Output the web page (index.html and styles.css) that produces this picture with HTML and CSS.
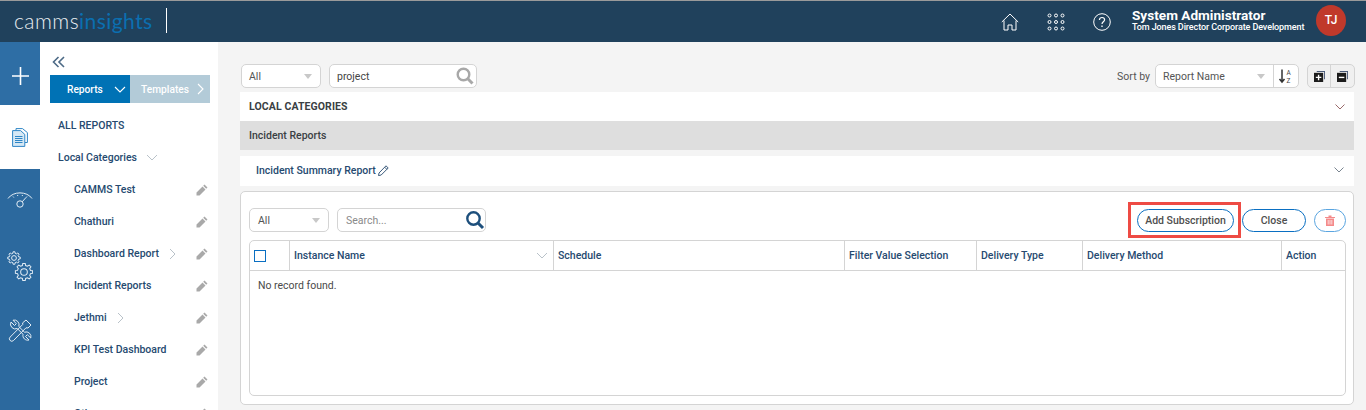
FILE: index.html
```html
<!DOCTYPE html>
<html lang="en">
  <head>
    <meta charset="UTF-8">
    <title>Camms Insights - Reports</title>
    <link rel="stylesheet" href="styles.css">
  </head>
  <body>
    <header class="topbar">
      <div class="logo"><span class="logo-a">camms</span><span class="logo-b">insights</span></div>
      <div class="logo-rule"></div>
      <div class="top-icons">
        <svg class="top-icon" width="18" height="18" viewBox="0 0 18 18" fill="none" stroke="#fff" stroke-width="1"><path d="M0.8 9 9 1l8.2 8M3 7.500V17h4v-5h4v5h4V7.500"/></svg>
        <svg class="top-icon" width="18" height="18" viewBox="0 0 18 18" fill="none" stroke="#fff" stroke-width="1"><circle cx="2.500" cy="2.500" r="1.500"/><circle cx="9" cy="2.500" r="1.500"/><circle cx="15.500" cy="2.500" r="1.500"/><circle cx="2.500" cy="9" r="1.500"/><circle cx="9" cy="9" r="1.500"/><circle cx="15.500" cy="9" r="1.500"/><circle cx="2.500" cy="15.500" r="1.500"/><circle cx="9" cy="15.500" r="1.500"/><circle cx="15.500" cy="15.500" r="1.500"/></svg>
        <svg class="top-icon" width="18" height="18" viewBox="0 0 18 18" fill="none" stroke="#fff" stroke-width="1"><circle cx="9" cy="9" r="8.300"/><path d="M6.400 7c0-1.600 1.200-2.500 2.600-2.500s2.600.9 2.600 2.300c0 2-2.600 2-2.600 4.200" stroke-width="1.200"/><path d="M9 12.600v1.400" stroke-width="1.300"/></svg>
      </div>
      <div class="user">
        <div class="user-name">System Administrator</div>
        <div class="user-role">Tom Jones Director Corporate Development</div>
      </div>
      <div class="avatar">TJ</div>
    </header>
    <div class="page">
      <nav class="rail">
        <div class="rail-item rail-add">
          <svg width="17" height="18" viewBox="0 0 17 18" stroke="#fff" stroke-width="1.600"><path d="M8.500 0v18M0 9h17"/></svg>
        </div>
        <div class="rail-item rail-active">
          <svg width="16" height="19" viewBox="0 0 16 19" fill="none" stroke="#2f86c6" stroke-width="1"><path d="M4 2.500V.6h6.500l4.900 4V14.500h-2.500"/><path d="M.6 2.600h8l4.200 3.800v12H.6z" fill="#d5e8f5"/><path d="M3 8.500h7.500M3 10.500h7.500M3 12.500h7.500M3 14.500h7.500" stroke-width="1.100"/></svg>
        </div>
        <div class="rail-item">
          <svg width="26" height="20" viewBox="0 0 26 20" fill="none" stroke="#e3edf5" stroke-width="1"><path d="M1 7.500C6 0 20 0 25 7.500"/><path d="M6 5.500l.8 1M10.500 4l.3 1M15.500 4l-.3 1M20 5.500l-.8 1"/><circle cx="13" cy="13" r="3.200"/><path d="M15.200 10.800 19 6.500"/></svg>
        </div>
        <div class="rail-item">
          <svg width="26" height="30" viewBox="0 0 26 30" fill="none" stroke="#e3edf5">
            <g transform="translate(7 7) scale(1.050)" stroke-width=".95">
              <polygon class="gear-shape" points="4.460,-1.110 5.940,-.84 5.940,.84 4.460,1.110 3.940,2.370 4.790,3.610 3.610,4.790 2.370,3.940 1.110,4.460 .84,5.940 -.84,5.940 -1.110,4.460 -2.370,3.940 -3.610,4.790 -4.790,3.610 -3.940,2.370 -4.460,1.110 -5.940,.84 -5.940,-.84 -4.460,-1.110 -3.940,-2.370 -4.790,-3.610 -3.610,-4.790 -2.370,-3.940 -1.110,-4.460 -.84,-5.940 .84,-5.940 1.110,-4.460 2.370,-3.940 3.610,-4.790 4.790,-3.610 3.940,-2.370"/>
              <circle r="2.300"/>
            </g>
            <g transform="translate(17 21) scale(1.450)" stroke-width=".69">
              <polygon class="gear-shape" points="4.460,-1.110 5.940,-.84 5.940,.84 4.460,1.110 3.940,2.370 4.790,3.610 3.610,4.790 2.370,3.940 1.110,4.460 .84,5.940 -.84,5.940 -1.110,4.460 -2.370,3.940 -3.610,4.790 -4.790,3.610 -3.940,2.370 -4.460,1.110 -5.940,.84 -5.940,-.84 -4.460,-1.110 -3.940,-2.370 -4.790,-3.610 -3.610,-4.790 -2.370,-3.940 -1.110,-4.460 -.84,-5.940 .84,-5.940 1.110,-4.460 2.370,-3.940 3.610,-4.790 4.790,-3.610 3.940,-2.370"/>
              <circle r="2.300"/>
            </g>
          </svg>
        </div>
        <div class="rail-item">
          <svg width="24" height="24" viewBox="0 0 24 24" fill="none" stroke="#e3edf5" stroke-width="1"><path d="M18 1l5 5-3 3-2-.2L5.500 21.500a2.400 2.400 0 0 1-3.400-3.400L14.800 5.400l-.2-1.500z"/><path d="M3 3l3.500 3.500 1.800-1.800L5 1.200A4.800 4.800 0 0 1 10.800 7.500L16.500 13.200A4.800 4.800 0 0 1 22.800 19L19.300 15.700l-1.800 1.800L21 21A4.800 4.800 0 0 1 15 15.300L9.300 9.500A4.800 4.800 0 0 1 3 3z"/></svg>
        </div>
      </nav>
      <aside class="sidebar">
        <div class="collapse">
          <svg width="13" height="12" viewBox="0 0 13 12" fill="none" stroke="#4d6a86" stroke-width="1.600"><path d="M6.500 1 1.500 6l5 5M12 1 7 6l5 5"/></svg>
        </div>
        <div class="tabs">
          <div class="tab tab-on">Reports<svg class="tab-arrow" width="12" height="7" viewBox="0 0 12 7" fill="none" stroke="#fff" stroke-width="1.100"><path d="M1 1l5 5 5-5"/></svg></div>
          <div class="tab tab-off">Templates<svg class="tab-arrow" width="7" height="12" viewBox="0 0 7 12" fill="none" stroke="#fff" stroke-width="1.100"><path d="M1 1l5 5-5 5"/></svg></div>
        </div>
        <div class="all-reports">ALL REPORTS</div>
        <div class="cat-head">Local Categories<svg class="chev" width="12" height="7" viewBox="0 0 12 7" fill="none" stroke="#b9c2c9"><path d="M1 1l5 5 5-5"/></svg></div>
        <ul class="cat-list">
          <li>CAMMS Test<svg class="pencil" width="12" height="12" viewBox="0 0 12 12" fill="#a9a9a9"><path d="M8.500.5l3 3-1.300 1.300-3-3zM6.500 2.500l3 3-6 6H.5v-3z"/></svg></li>
          <li>Chathuri<svg class="pencil" width="12" height="12" viewBox="0 0 12 12" fill="#a9a9a9"><path d="M8.500.5l3 3-1.300 1.300-3-3zM6.500 2.500l3 3-6 6H.5v-3z"/></svg></li>
          <li>Dashboard Report<svg class="chev" width="7" height="12" viewBox="0 0 7 12" fill="none" stroke="#b9c2c9"><path d="M1 1l5 5-5 5"/></svg><svg class="pencil" width="12" height="12" viewBox="0 0 12 12" fill="#a9a9a9"><path d="M8.500.5l3 3-1.300 1.300-3-3zM6.500 2.500l3 3-6 6H.5v-3z"/></svg></li>
          <li>Incident Reports<svg class="pencil" width="12" height="12" viewBox="0 0 12 12" fill="#a9a9a9"><path d="M8.500.5l3 3-1.300 1.300-3-3zM6.500 2.500l3 3-6 6H.5v-3z"/></svg></li>
          <li>Jethmi<svg class="chev" width="7" height="12" viewBox="0 0 7 12" fill="none" stroke="#b9c2c9"><path d="M1 1l5 5-5 5"/></svg><svg class="pencil" width="12" height="12" viewBox="0 0 12 12" fill="#a9a9a9"><path d="M8.500.5l3 3-1.300 1.300-3-3zM6.500 2.500l3 3-6 6H.5v-3z"/></svg></li>
          <li>KPI Test Dashboard<svg class="pencil" width="12" height="12" viewBox="0 0 12 12" fill="#a9a9a9"><path d="M8.500.5l3 3-1.300 1.300-3-3zM6.500 2.500l3 3-6 6H.5v-3z"/></svg></li>
          <li>Project<svg class="pencil" width="12" height="12" viewBox="0 0 12 12" fill="#a9a9a9"><path d="M8.500.5l3 3-1.300 1.300-3-3zM6.500 2.500l3 3-6 6H.5v-3z"/></svg></li>
          <li>Other<svg class="pencil" width="12" height="12" viewBox="0 0 12 12" fill="#a9a9a9"><path d="M8.500.5l3 3-1.300 1.300-3-3zM6.500 2.500l3 3-6 6H.5v-3z"/></svg></li>
        </ul>
      </aside>
      <main class="main">
        <div class="toolbar">
          <div class="select select-all">All<span class="caret"></span></div>
          <div class="search search-top">project
            <svg width="18" height="18" viewBox="0 0 18 18" fill="none" stroke="#a8a8a8" stroke-width="2.400"><circle cx="7.500" cy="7.500" r="5.800"/><path d="M11.800 11.800 16.500 16.500" stroke-width="3"/></svg>
          </div>
          <div class="sort">
            <span class="sort-label">Sort by</span>
            <div class="sort-box">
              <div class="sort-name">Report Name<span class="caret"></span></div>
              <div class="sort-az">
                <svg width="16" height="16" viewBox="0 0 16 16" fill="none"><path d="M4 1.500v12M1.500 11 4 14l2.500-3" stroke="#333" stroke-width="1.500"/><text x="8.500" y="6.500" class="az">A</text><text x="8.500" y="14.500" class="az">Z</text></svg>
              </div>
            </div>
            <div class="expand-box">
              <div class="expand-btn">
                <svg width="11" height="11" viewBox="0 0 12 12"><path d="M3 0h9v9h-1V1H3z" fill="#4a5a78"/><rect x="0" y="2" width="10" height="10" fill="#1c1c1c"/><path d="M5 4v6M2 7h6" stroke="#fff" stroke-width="1.500"/></svg>
              </div>
              <div class="expand-btn">
                <svg width="11" height="11" viewBox="0 0 12 12"><path d="M3 0h9v9h-1V1H3z" fill="#4a5a78"/><rect x="0" y="2" width="10" height="10" fill="#1c1c1c"/><path d="M2 7h6" stroke="#fff" stroke-width="1.500"/></svg>
              </div>
            </div>
          </div>
        </div>
        <div class="row row-local">LOCAL CATEGORIES<svg width="10" height="6" viewBox="0 0 10 6" fill="none" stroke="#9a6a6a"><path d="M.5.5 5 5 9.500.5"/></svg></div>
        <div class="row row-grey">Incident Reports</div>
        <div class="row row-report">
          <span class="report-title">Incident Summary Report
            <svg width="11" height="11" viewBox="0 0 11 11" fill="none" stroke="#3b5b7c"><path d="M8 .8 10.200 3l-7 7-2.700.6L1 8z"/><path d="M6.700 2.200 8.800 4.300"/></svg>
          </span>
          <svg width="10" height="6" viewBox="0 0 10 6" fill="none" stroke="#7a8590"><path d="M.5.5 5 5 9.500.5"/></svg>
        </div>
        <section class="panel">
          <div class="panel-tools">
            <div class="select select-panel">All<span class="caret"></span></div>
            <div class="search search-panel">Search...
              <svg width="20" height="20" viewBox="0 0 20 20" fill="none" stroke="#1d4f7c" stroke-width="2.400"><circle cx="8.500" cy="8.500" r="6.200"/><path d="M13 13l5 5" stroke-width="3"/></svg>
            </div>
            <div class="panel-btns">
              <div class="highlight"><button class="btn btn-add">Add Subscription</button></div>
              <button class="btn btn-close">Close</button>
              <button class="btn btn-trash">
                <svg width="10" height="11" viewBox="0 0 10 11" fill="#f48a8a"><path d="M0 2h10v1H0zM3.500.5h3V2h-3zM1 3.500h8V11H1z"/><path d="M3.200 5v4.500M5 5v4.500M6.800 5v4.500" stroke="#fff" stroke-width=".7"/></svg>
              </button>
            </div>
          </div>
          <div class="grid">
            <div class="grid-head">
              <div class="col col-check"><span class="check"></span></div>
              <div class="col col-name">Instance Name<svg width="12" height="7" viewBox="0 0 12 7" fill="none" stroke="#b9c2c9"><path d="M1 1l5 5 5-5"/></svg></div>
              <div class="col col-sched">Schedule</div>
              <div class="col col-filter">Filter Value Selection</div>
              <div class="col col-type">Delivery Type</div>
              <div class="col col-method">Delivery Method</div>
              <div class="col col-action">Action</div>
            </div>
            <div class="grid-empty">No record found.</div>
          </div>
        </section>
      </main>
    </div>
  </body>
</html>
```

FILE: styles.css
```css
:root {
  --navy: #20415c;
  --rail: #2c699e;
  --line: #d4d4d4;
  --title: #264a70;
}

* {
  box-sizing: border-box;
}

html,
body {
  height: 410px;
}

body {
  margin: 0;
  overflow: hidden;
  font-family: Roboto, sans-serif;
  font-size: 10px;
  background-color: #f4f4f4;
  color: #333;
}

.topbar {
  height: 42px;
  background-color: var(--navy);
  border-top: 1px solid #9a9a9a;
  padding-bottom: 3px;
  display: flex;
  align-items: center;
  color: #fff;
}

.logo {
  margin-left: 14px;
  font-family: Lato, sans-serif;
  font-size: 21px;
  letter-spacing: 0.45px;
}

.logo-a {
  font-weight: 300;
  color: #e8edf1;
}

.logo-b {
  color: #0b6fb0;
}

.logo-rule {
  width: 1px;
  height: 25px;
  background-color: #fff;
  margin-left: 13px;
}

.top-icons {
  margin-left: auto;
  display: flex;
  gap: 28px;
  align-items: center;
  margin-top: 3px;
}

.user {
  margin-left: 21px;
  width: 185px;
}

.user-name {
  font-size: 13.6px;
  font-weight: 700;
  line-height: 14px;
}

.user-role {
  font-size: 9px;
  font-weight: 500;
  line-height: 11px;
  letter-spacing: -0.1px;
}

.avatar {
  width: 30px;
  height: 31px;
  border-radius: 50%;
  background-color: #c0392b;
  display: flex;
  align-items: center;
  justify-content: center;
  font-size: 12px;
  font-weight: 500;
  margin-right: 20px;
  margin-left: -1px;
}

.page {
  display: flex;
  height: 368px;
}

.rail {
  width: 40px;
  background-color: var(--rail);
  flex-shrink: 0;
}

.rail-item {
  height: 64px;
  display: flex;
  align-items: center;
  justify-content: center;
}

.rail-add {
  height: 63px;
  padding-top: 5px;
  background-color: #2e6ea5;
}

.rail-active {
  background-color: #fff;
}

.rail-item:nth-child(4) {
  height: 66px;
}

.sidebar {
  width: 178px;
  background-color: #fff;
  flex-shrink: 0;
  padding-left: 10px;
  overflow: hidden;
}

.collapse {
  height: 33px;
  padding-top: 14px;
  padding-left: 2px;
}

.tabs {
  display: flex;
  width: 160px;
  height: 28px;
}

.tab {
  width: 80px;
  display: flex;
  align-items: center;
  color: #fff;
  font-weight: 500;
  font-size: 10.2px;
}

.tab-on {
  background-color: #0072b5;
  padding-left: 17px;
}

.tab-off {
  background-color: #b3cbd8;
  padding-left: 11px;
}

.tab-arrow {
  margin-left: auto;
  margin-right: 4px;
}

.tab-off .tab-arrow {
  margin-right: 6px;
}

.all-reports {
  margin-top: 15px;
  padding-left: 8px;
  height: 32px;
  line-height: 16px;
  font-weight: 500;
  font-size: 10.5px;
  color: var(--title);
}

.cat-head {
  padding-left: 8px;
  height: 32px;
  line-height: 16px;
  font-weight: 500;
  font-size: 10.5px;
  color: var(--title);
  display: flex;
  align-items: flex-start;
}

.cat-head .chev {
  margin-left: 9px;
  margin-top: 4px;
}

.cat-list {
  list-style-type: none;
  margin: 0;
  padding: 0 0 0 24px;
}

.cat-list li {
  height: 32px;
  line-height: 16px;
  display: flex;
  align-items: flex-start;
  font-weight: 500;
  font-size: 10.5px;
  color: var(--title);
  padding-right: 10px;
}

.cat-list .chev {
  margin-left: 10px;
  margin-top: 2px;
}

.pencil {
  margin-left: auto;
  margin-top: 2px;
}

.main {
  flex: 1;
  padding: 22px 11px 0 22px;
  min-width: 0;
}

.toolbar {
  display: flex;
  align-items: center;
  height: 24px;
  margin-bottom: 4px;
  padding-left: 1px;
}

.select,
.search,
.sort-box,
.expand-box {
  background-color: #fff;
  border: 1px solid var(--line);
  border-radius: 5px;
  height: 24px;
}

.select {
  display: flex;
  align-items: center;
  padding-left: 8px;
  color: #555;
  font-size: 10.5px;
}

.caret {
  width: 0;
  height: 0;
  border-left: 4.500px solid transparent;
  border-right: 4.500px solid transparent;
  border-top: 5px solid #c8c8c8;
  margin-left: auto;
}

.select .caret {
  margin-right: 8px;
}

.select-all {
  width: 80px;
  padding-left: 7px;
}

.search {
  display: flex;
  align-items: center;
  padding-left: 8px;
  justify-content: space-between;
  font-size: 10.5px;
}

.search-top {
  width: 148px;
  margin-left: 8px;
  color: #444;
  padding-left: 7px;
  padding-right: 2px;
}

.sort {
  margin-left: auto;
  display: flex;
  align-items: center;
}

.sort-label {
  color: #555;
  font-size: 10.5px;
  margin-right: 5px;
}

.sort-box {
  display: flex;
  width: 144px;
}

.sort-name {
  flex: 1;
  display: flex;
  align-items: center;
  padding-left: 7px;
  padding-right: 8px;
  font-size: 10.5px;
  color: #555;
  border-right: 1px solid var(--line);
}

.sort-az {
  width: 24px;
  display: flex;
  align-items: center;
  justify-content: center;
}

.az {
  font-family: Roboto, sans-serif;
  font-size: 6.500px;
  fill: #444;
}

.expand-box {
  display: flex;
  margin-left: 8px;
  background-color: #f0f0f0;
}

.expand-btn {
  width: 23px;
  display: flex;
  align-items: center;
  justify-content: center;
}

.expand-btn:first-child {
  border-right: 1px solid var(--line);
}

.row {
  display: flex;
  align-items: center;
  justify-content: space-between;
  height: 29px;
  width: 1114px;
  padding: 0 9px;
  font-weight: 500;
  font-size: 10.5px;
  background-color: #fff;
}

.row-local {
  color: #3a3f44;
  font-weight: 700;
  letter-spacing: 0.1px;
}

.row-grey {
  background-color: #dedede;
  color: #3a3f44;
}

.row-report {
  margin-top: 6px;
  height: 30px;
  padding: 0 10px 2px 16px;
}

.report-title {
  color: var(--title);
  display: flex;
  align-items: center;
  gap: 2px;
}

.panel {
  width: 1114px;
  height: 214px;
  margin-top: 5px;
  background-color: #fff;
  border: 1px solid var(--line);
  border-radius: 5px;
  padding: 16px 7px 0 8px;
}

.panel-tools {
  display: flex;
  align-items: center;
  height: 24px;
  margin-bottom: 8px;
}

.select-panel {
  width: 80px;
}

.search-panel {
  width: 149px;
  margin-left: 8px;
  color: #8a8a8a;
  padding-right: 0;
}

.panel-btns {
  margin-left: auto;
  display: flex;
  align-items: center;
  gap: 8px;
}

.highlight {
  border: 3px solid #ee4b44;
  padding: 0 4px 0 6px;
  height: 36px;
  margin: -6px -7px -6px 0;
  display: flex;
  align-items: center;
}

.btn {
  font-family: Roboto, sans-serif;
  height: 23px;
  padding: 0;
  background-color: #fff;
  border: 1px solid #0a6fc2;
  border-radius: 12px;
  color: #4f4f4f;
  font-size: 10.5px;
  font-weight: 500;
}

.btn-add {
  width: 97px;
}

.btn-close {
  width: 64px;
}

.btn-trash {
  width: 32px;
  border-color: #5aa5e0;
  display: flex;
  align-items: center;
  justify-content: center;
}

.grid {
  border: 1px solid var(--line);
  border-radius: 5px;
  height: 156px;
}

.grid-head {
  display: flex;
  height: 30px;
  border-bottom: 1px solid var(--line);
  font-weight: 500;
  font-size: 10.5px;
  color: var(--title);
}

.col {
  display: flex;
  align-items: center;
  padding-left: 4px;
  border-right: 1px solid var(--line);
}

.col-check {
  width: 40px;
}

.check {
  width: 12px;
  height: 12px;
  border: 1px solid #0a6fc2;
}

.col-name {
  width: 264px;
  justify-content: space-between;
  padding-right: 5px;
}

.col-sched {
  width: 291px;
}

.col-filter {
  width: 132px;
}

.col-type {
  width: 106px;
}

.col-method {
  width: 199px;
}

.col-action {
  flex: 1;
  border-right: 0;
}

.grid-empty {
  padding: 8px;
  color: #4a4a4a;
  font-size: 10.5px;
}
```
